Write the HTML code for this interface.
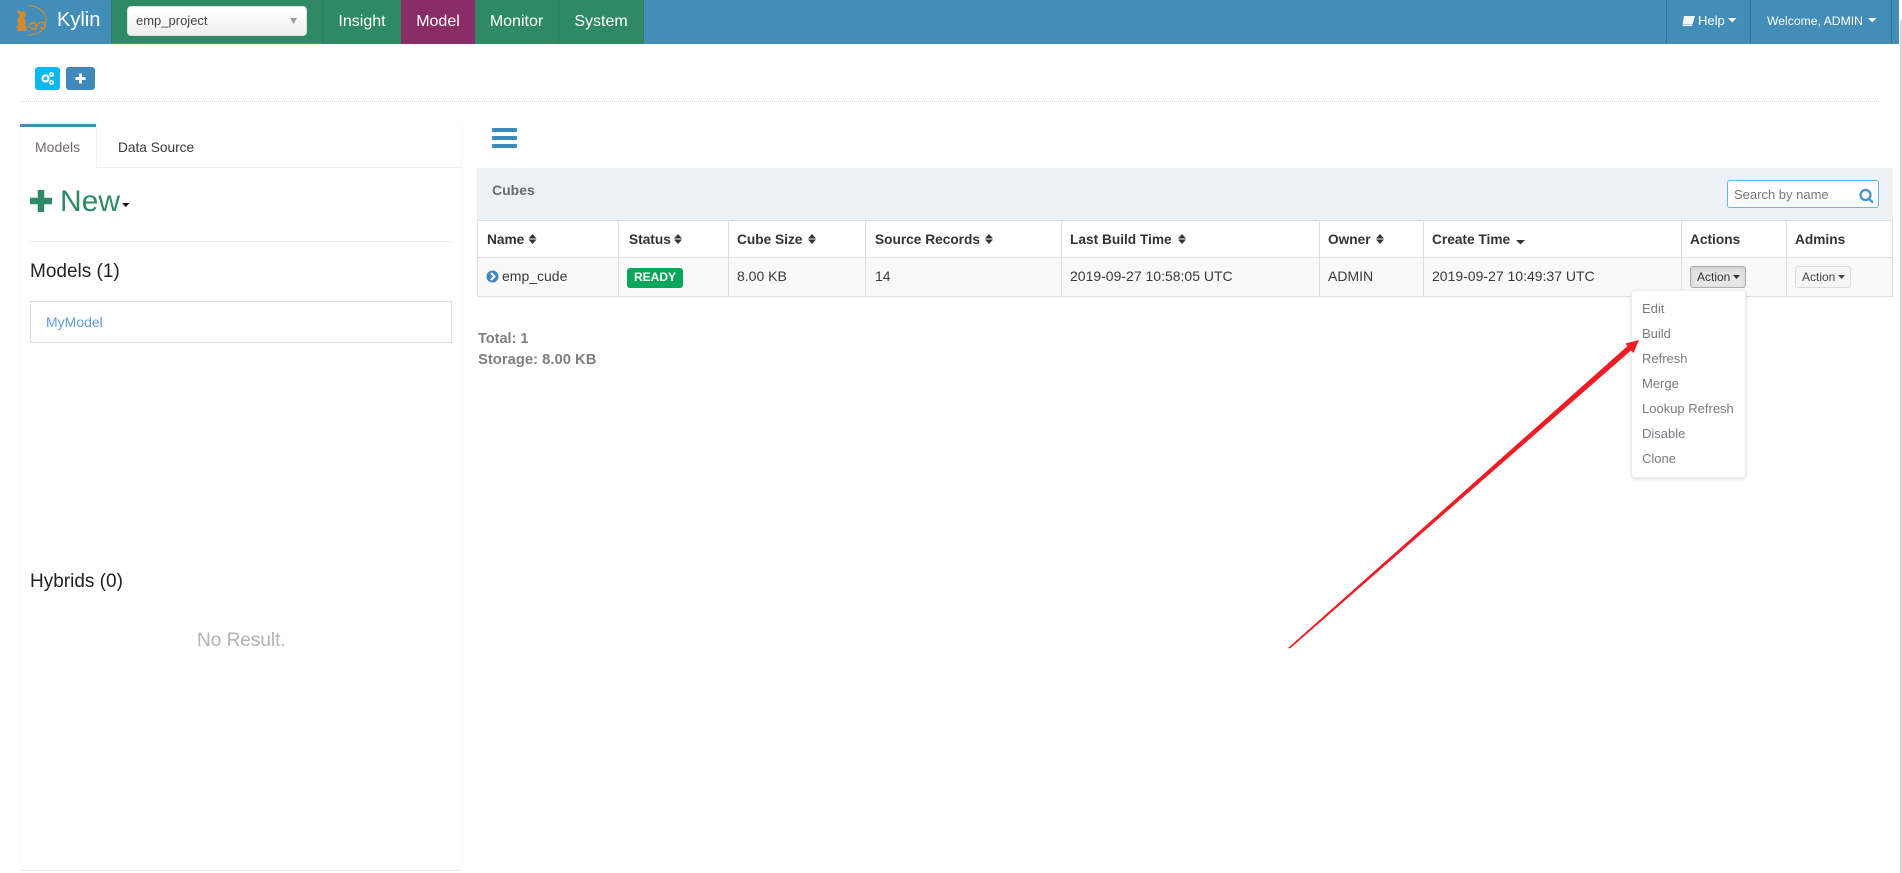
<!DOCTYPE html>
<html><head><meta charset="utf-8"><title>Kylin</title>
<style>
html,body{margin:0;padding:0;width:1902px;height:873px;overflow:hidden;background:#fff;font-family:"Liberation Sans",Arial,sans-serif}
.a{position:absolute}
.t{position:absolute;line-height:20px;white-space:nowrap}
.h{font-weight:bold;font-size:13.7px;color:#333;top:230px}
.c{font-size:14px;color:#393939;top:266px}
.v{position:absolute;top:220px;width:1px;height:76px;background:#ddd}
.m{position:absolute;left:1642px;font-size:13px;color:#777b80;line-height:20px}
.n{position:absolute;top:0;height:44px;line-height:44px;font-size:16px;color:#fff;text-align:center}
svg{position:absolute;overflow:visible}
</style></head><body>
<!-- scrollbar -->
<div class="a" style="left:1900px;top:20px;width:2px;height:853px;background:#d4d4d4"></div>
<!-- navbar -->
<div class="a" style="left:0;top:0;width:1899px;height:44px;background:#438eb9"></div>
<div class="a" style="left:111px;top:0;width:211px;height:43px;background:#2e8965;border-left:1px solid #2f7a68;box-sizing:border-box"></div>
<svg style="left:0;top:0" width="60" height="44" fill="none" stroke="#d8892d">
<path d="M28 6C38 5 46 12 46 20.500C46 29 38 35.500 28 35" stroke-width="1.100"/>
<path d="M18 10l4 2 3-1 1 4-2 3 2 3-1 4 2 3-1 3h-9l1-3-2-1 3-3-2-3 2-4 1-2-3-3z" fill="#d8892d" stroke="none"/>
<path d="M29 28c0-6 7-7 7-2s-4 3.500-4.500 1.500M37 27c1-6 8-6 8-1.500s-4 3-4.500 1" stroke-width="1.700"/>
</svg>
<div class="t" style="left:57px;top:10px;font-size:20px;color:#fff">Kylin</div>
<div class="a" style="left:127px;top:6px;width:180px;height:30px;box-sizing:border-box;background:linear-gradient(#fff 20%,#eee);border:1px solid #ddd;border-radius:4px"></div>
<div class="t" style="left:136px;top:11px;font-size:13px;color:#444">emp_project</div>
<svg style="left:290px;top:18px" width="8" height="8"><path d="M0 0H7L3.500 6z" fill="#999"/></svg>
<div class="n" style="left:322px;width:79px;background:#2e8965;border-left:1px solid #2f7a68;box-sizing:border-box">Insight</div>
<div class="n" style="left:401px;width:74px;background:#8a2d66">Model</div>
<div class="n" style="left:475px;width:84px;background:#2e8965;border-right:1px solid #2f7a68;box-sizing:border-box">Monitor</div>
<div class="n" style="left:559px;width:85px;background:#2e8965;border-right:1px solid #2f7a68;box-sizing:border-box">System</div>
<div class="a" style="left:1666px;top:0;width:1px;height:44px;background:#35749b"></div>
<div class="a" style="left:1750px;top:0;width:1px;height:44px;background:#35749b"></div>
<div class="a" style="left:1891px;top:0;width:1px;height:44px;background:#35749b"></div>
<svg style="left:1681px;top:15px" width="15" height="12"><path d="M3 1H14L11.500 9.500H1.500z" fill="#f2f6f9"/><path d="M1.500 10.500H11" stroke="#f2f6f9" stroke-width="1.200"/></svg>
<div class="t" style="left:1698px;top:11px;font-size:13px;color:#fff">Help</div>
<svg style="left:1728px;top:18px" width="9" height="5"><path d="M0 0H8.500L4.250 4.500z" fill="#fff"/></svg>
<div class="t" style="left:1767px;top:11px;font-size:12.200px;color:#fff">Welcome, ADMIN</div>
<svg style="left:1868px;top:18px" width="9" height="5"><path d="M0 0H8.500L4.250 4.500z" fill="#fff"/></svg>
<!-- toolbar -->
<div class="a" style="left:35px;top:67px;width:25px;height:23px;background:#0bb7ef;border-radius:3px"></div>
<svg style="left:40px;top:71px" width="16" height="15"><circle cx="5.500" cy="7.500" r="3" fill="none" stroke="#fff" stroke-width="2.200"/><circle cx="11.500" cy="3.500" r="1.700" fill="none" stroke="#fff" stroke-width="1.500"/><circle cx="11.500" cy="11.500" r="1.700" fill="none" stroke="#fff" stroke-width="1.500"/></svg>
<div class="a" style="left:66px;top:67px;width:29px;height:23px;background:#3f88b8;border-radius:3px"></div>
<svg style="left:75px;top:73px" width="11" height="11"><path d="M5.500 0.500V10.500M0.500 5.500H10.500" stroke="#fff" stroke-width="3"/></svg>
<div class="a" style="left:20px;top:101px;width:1859px;border-top:1px dotted #d8d8d8"></div>
<!-- left panel -->
<div class="a" style="left:20px;top:124px;width:442px;height:747px;box-sizing:border-box;border-right:1px solid #fafafa;border-left:1px solid #fafafa;border-bottom:1px solid #e8e8e8;border-radius:0 0 3px 3px"></div>
<div class="a" style="left:20px;top:124px;width:76px;height:3px;background:#438eb9"></div>
<div class="a" style="left:96px;top:127px;width:366px;height:41px;box-sizing:border-box;border-bottom:1px solid #f0f0f0;border-left:1px solid #f0f0f0"></div>
<div class="t" style="left:35px;top:137px;font-size:14px;color:#75696a">Models</div>
<div class="t" style="left:118px;top:138px;font-size:13.700px;color:#393939">Data Source</div>
<svg style="left:30px;top:190px" width="22" height="22"><path d="M11 0V22M0 11H22" stroke="#2e8965" stroke-width="6.500"/></svg>
<div class="t" style="left:60px;top:192px;font-size:30px;color:#2e8965">New</div>
<svg style="left:122px;top:203px" width="8" height="4"><path d="M0 0H7.500L3.750 4z" fill="#111"/></svg>
<div class="a" style="left:30px;top:241px;width:422px;height:1px;background:#eee"></div>
<div class="t" style="left:30px;top:262px;font-size:19px;color:#222">Models (1)</div>
<div class="a" style="left:30px;top:301px;width:422px;height:42px;box-sizing:border-box;border:1px solid #ddd"></div>
<div class="t" style="left:46px;top:312px;font-size:14px;color:#5f9bd6">MyModel</div>
<div class="t" style="left:30px;top:572px;font-size:19px;color:#222">Hybrids (0)</div>
<div class="t" style="left:197px;top:631px;font-size:19px;color:#b3b3b3">No Result.</div>
<!-- hamburger -->
<div class="a" style="left:492px;top:128px;width:25px;height:4px;background:#3d8bbf;border-radius:1px"></div>
<div class="a" style="left:492px;top:136px;width:25px;height:4px;background:#3d8bbf;border-radius:1px"></div>
<div class="a" style="left:492px;top:144px;width:25px;height:4px;background:#3d8bbf;border-radius:1px"></div>
<!-- cubes header -->
<div class="a" style="left:477px;top:168px;width:1416px;height:52px;background:#eef1f6"></div>
<div class="t" style="left:492px;top:180px;font-size:14px;font-weight:bold;color:#6b6b6b">Cubes</div>
<div class="a" style="left:1727px;top:180px;width:152px;height:28px;box-sizing:border-box;background:#fff;border:1px solid #6fb3e0;border-radius:3px"></div>
<div class="t" style="left:1734px;top:185px;font-size:13px;color:#777">Search by name</div>
<svg style="left:1859px;top:189px" width="16" height="14" fill="none" stroke="#478fca" stroke-width="2.200"><circle cx="6.500" cy="6" r="5"/><path d="M10 10L14 13.500"/></svg>
<!-- table -->
<div class="a" style="left:477px;top:220px;width:1416px;height:77px;box-sizing:border-box;border:1px solid #ddd"></div>
<div class="a" style="left:478px;top:258px;width:1414px;height:38px;background:#f9f9f9"></div>
<div class="a" style="left:477px;top:257px;width:1416px;height:1px;background:#ddd"></div>
<div class="v" style="left:618px"></div><div class="v" style="left:728px"></div><div class="v" style="left:865px"></div><div class="v" style="left:1061px"></div><div class="v" style="left:1319px"></div><div class="v" style="left:1423px"></div><div class="v" style="left:1681px"></div><div class="v" style="left:1786px"></div>
<div class="t h" style="left:487px">Name</div>
<div class="t h" style="left:629px">Status</div>
<div class="t h" style="left:737px">Cube Size</div>
<div class="t h" style="left:875px">Source Records</div>
<div class="t h" style="left:1070px">Last Build Time</div>
<div class="t h" style="left:1328px">Owner</div>
<div class="t h" style="left:1432px">Create Time</div>
<div class="t h" style="left:1690px">Actions</div>
<div class="t h" style="left:1795px">Admins</div>
<svg style="left:0;top:0" width="1902" height="300" fill="#333">
<path d="M528.500 238.500L532.500 234L536.500 238.500zM528.500 239.500H536.500L532.500 244z"/>
<path d="M674 238.500L678 234L682 238.500zM674 239.500H682L678 244z"/>
<path d="M808 238.500L812 234L816 238.500zM808 239.500H816L812 244z"/>
<path d="M985 238.500L989 234L993 238.500zM985 239.500H993L989 244z"/>
<path d="M1178 238.500L1182 234L1186 238.500zM1178 239.500H1186L1182 244z"/>
<path d="M1376 238.500L1380 234L1384 238.500zM1376 239.500H1384L1380 244z"/>
<path d="M1516 240H1525L1520.500 244.500z"/>
</svg>
<svg style="left:486px;top:270px" width="13" height="13"><circle cx="6.500" cy="6.500" r="6" fill="#3f87c5"/><path d="M5 3L8.500 6.500L5 10" fill="none" stroke="#fff" stroke-width="2"/></svg>
<div class="t c" style="left:502px">emp_cude</div>
<div class="a" style="left:627px;top:268px;width:56px;height:20px;line-height:19px;background:#0aa75a;border-radius:3px;color:#fff;font-size:12px;font-weight:bold;text-align:center">READY</div>
<div class="t c" style="left:737px">8.00 KB</div>
<div class="t c" style="left:875px">14</div>
<div class="t c" style="left:1070px">2019-09-27 10:58:05 UTC</div>
<div class="t c" style="left:1328px">ADMIN</div>
<div class="t c" style="left:1432px">2019-09-27 10:49:37 UTC</div>
<div class="a" style="left:1690px;top:266px;width:56px;height:22px;box-sizing:border-box;background:#e6e6e6;border:1px solid #adadad;border-radius:3px;box-shadow:inset 0 2px 4px rgba(0,0,0,.12)"></div>
<div class="t" style="left:1697px;top:267px;font-size:12px;color:#333">Action</div>
<svg style="left:1733px;top:275px" width="7" height="4"><path d="M0 0H7L3.500 4z" fill="#333"/></svg>
<div class="a" style="left:1795px;top:266px;width:56px;height:22px;box-sizing:border-box;background:#f5f5f5;border:1px solid #ddd;border-radius:3px"></div>
<div class="t" style="left:1802px;top:267px;font-size:12px;color:#444">Action</div>
<svg style="left:1838px;top:275px" width="7" height="4"><path d="M0 0H7L3.500 4z" fill="#444"/></svg>
<!-- totals -->
<div class="t" style="left:478px;top:329px;font-size:14.500px;font-weight:bold;color:#808080">Total: 1</div>
<div class="t" style="left:478px;top:350px;font-size:14.800px;font-weight:bold;color:#808080">Storage: 8.00 KB</div>
<!-- dropdown -->
<div class="a" style="left:1631px;top:290px;width:115px;height:188px;box-sizing:border-box;background:#fff;border:1px solid #eee;border-radius:4px;box-shadow:0 1px 3px rgba(0,0,0,.14)"></div>
<div class="m" style="top:299px">Edit</div>
<div class="m" style="top:324px">Build</div>
<div class="m" style="top:349px">Refresh</div>
<div class="m" style="top:374px">Merge</div>
<div class="m" style="top:399px">Lookup Refresh</div>
<div class="m" style="top:424px">Disable</div>
<div class="m" style="top:449px">Clone</div>
<!-- arrow -->
<svg style="left:0;top:0" width="1902" height="873"><path d="M1288 648L1627.500 346L1625.500 343.500L1639 340L1633.500 353L1631 350.500L1290 648.500z" fill="#ee1c25"/></svg>
</body></html>
